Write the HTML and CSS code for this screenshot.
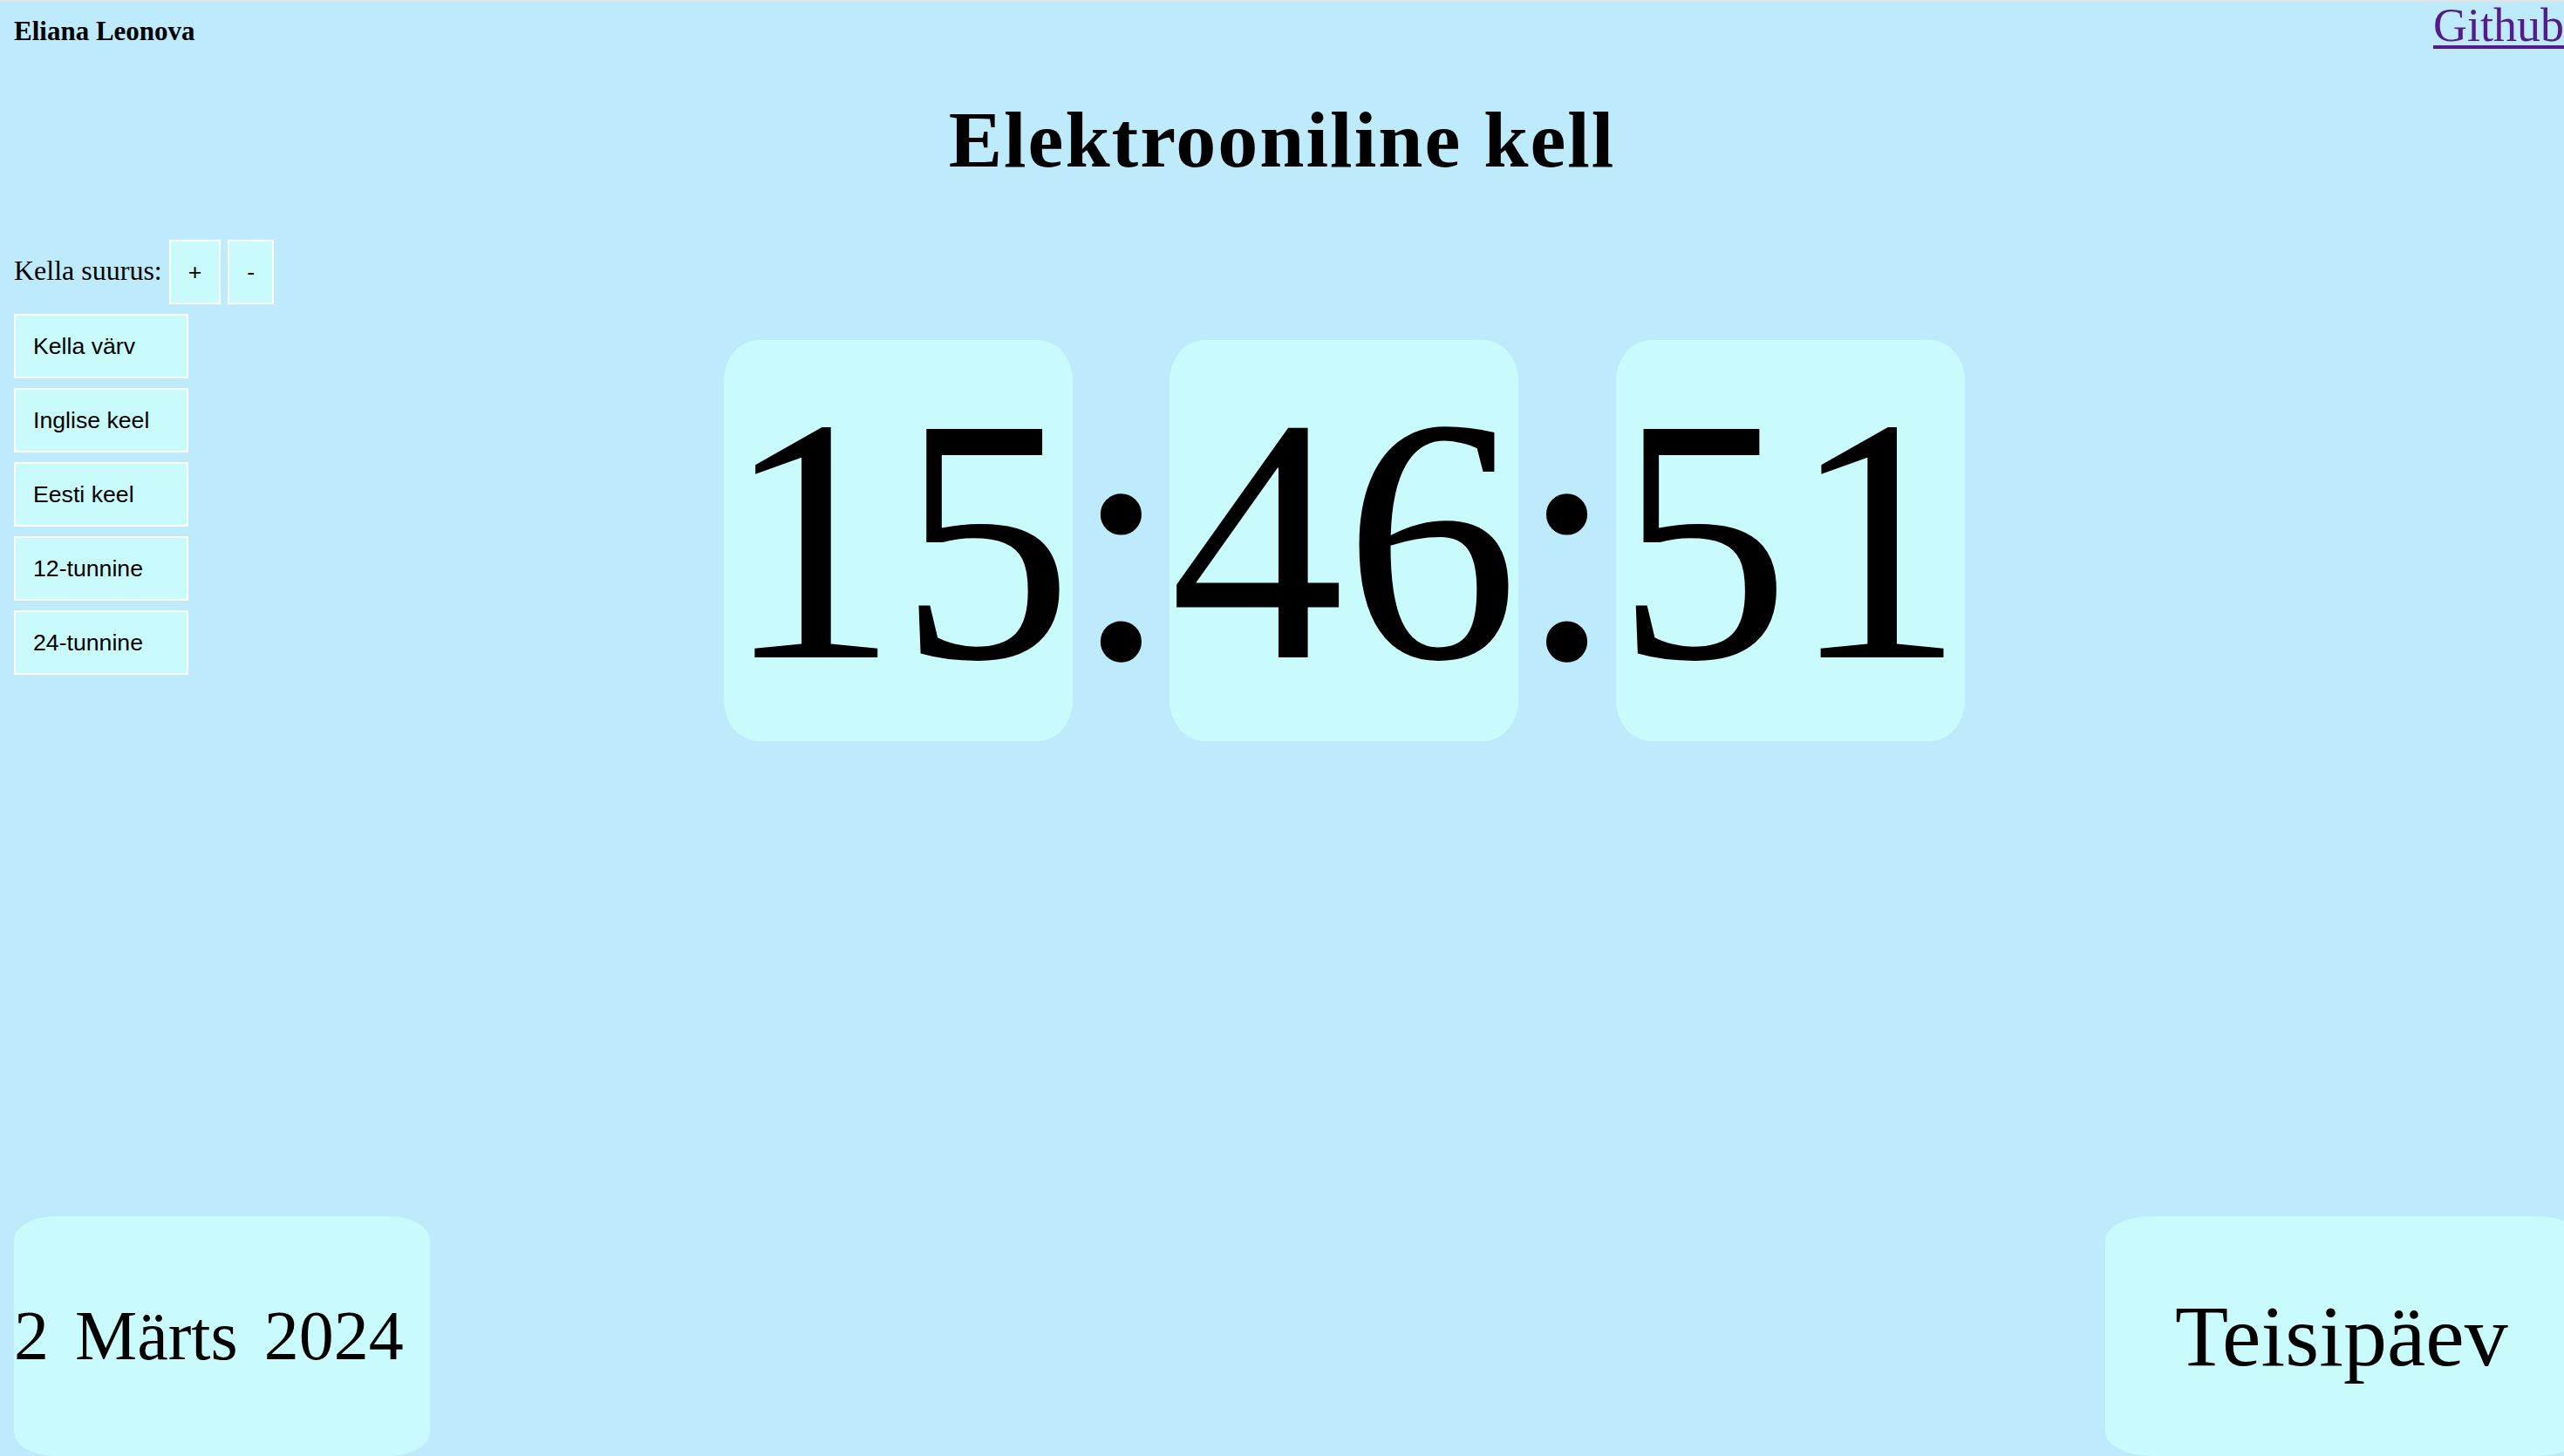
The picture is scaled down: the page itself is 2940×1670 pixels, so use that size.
FILE: index.html
```html
<!DOCTYPE html>
<html lang="et">
<head>
<meta charset="utf-8">
<title>Elektrooniline kell</title>
<link rel="stylesheet" href="styles.css">
</head>
<body>
<header class="top">
  <span class="author">Eliana Leonova</span>
  <a class="github" href="#">Github</a>
</header>
<h1 class="title">Elektrooniline kell</h1>
<main class="main">
  <nav class="controls">
    <div class="size-row">
      <span class="size-label">Kella suurus:</span>
      <button class="btn">+</button>
      <button class="btn">-</button>
    </div>
    <button class="btn wide">Kella värv</button>
    <button class="btn wide">Inglise keel</button>
    <button class="btn wide">Eesti keel</button>
    <button class="btn wide">12-tunnine</button>
    <button class="btn wide">24-tunnine</button>
  </nav>
  <div class="clock"><span class="cell">15</span>:<span class="cell">46</span>:<span class="cell">51</span></div>
</main>
<footer class="bottom">
  <div class="info date">2 Märts 2024</div>
  <div class="info day">Teisipäev</div>
</footer>
</body>
</html>
```
FILE: styles.css
```css
html {
  background: #bdebfb;
  border-top: 2px solid #e2e2e2;
  overflow: hidden;
}
body {
  margin: 0 0 0 16px;
  height: calc(100vh - 2px);
  display: flex;
  flex-direction: column;
  font-family: "Liberation Serif", "Times New Roman", serif;
  font-size: 32px;
  color: #000;
}
.top {
  display: flex;
  justify-content: space-between;
  align-items: flex-start;
}
.author {
  font-weight: bold;
  font-size: 31px;
  line-height: 1;
  margin-top: 18px;
}
.github {
  font-size: 54px;
  line-height: 1;
  color: #551a8b;
  text-decoration: underline;
  text-decoration-thickness: 4px;
  text-underline-offset: 5px;
}
.title {
  margin: 58px 16px 69px 0;
  font-size: 92px;
  line-height: 1;
  font-weight: bold;
  letter-spacing: 2px;
  text-align: center;
}
.main {
  flex: 1;
  display: flex;
  align-items: flex-start;
}
.controls {
  display: flex;
  flex-direction: column;
  align-items: flex-start;
  gap: 11px;
}
.size-row {
  display: flex;
  align-items: baseline;
  gap: 8px;
}
.btn {
  font-family: "Liberation Sans", Arial, sans-serif;
  font-size: 26.67px;
  line-height: 30px;
  padding: 20px;
  border: 2px solid #ffffff;
  background: #c9fafc;
  color: #000;
  margin: 0;
  text-align: left;
}
.wide {
  width: 200px;
}
.clock {
  margin-left: 516px;
  margin-top: 115px;
  white-space: nowrap;
  font-size: 400px;
  line-height: normal;
}
.cell {
  display: inline-block;
  background: #c9fafc;
  border-radius: 10%;
}
.bottom {
  display: flex;
  justify-content: space-between;
}
.info {
  height: 275px;
  display: flex;
  align-items: center;
  background: #c9fafc;
  border-radius: 10%;
  box-sizing: border-box;
  white-space: nowrap;
}
.date {
  width: 477px;
  font-size: 80px;
  word-spacing: 10px;
}
.day {
  width: 548px;
  margin-right: -22px;
  padding-left: 80px;
  font-size: 100px;
}
```
